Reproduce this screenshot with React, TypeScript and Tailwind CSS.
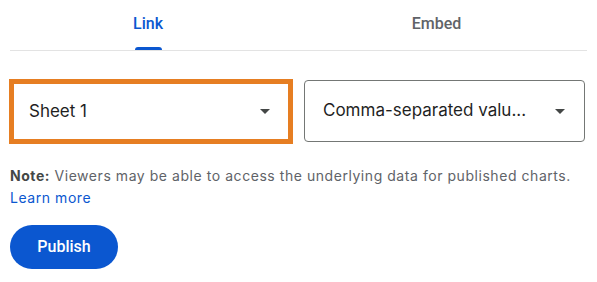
import { useState } from "react";

const tabs = ["Link", "Embed"];

function Caret() {
  return (
    <svg width="10" height="5" viewBox="0 0 10 5" className="shrink-0">
      <path d="M0 0h10L5 5z" fill="#444746" />
    </svg>
  );
}

export default function App() {
  const [tab, setTab] = useState("Link");

  return (
    <div className="w-[597px] h-[282px] bg-white overflow-hidden font-[Inter,sans-serif]">
      {/* tabs */}
      <div className="mx-[10px] flex border-b border-[#e3e3e3] h-[51px] font-[Roboto,sans-serif]">
        {tabs.map((t) => (
          <button
            key={t}
            onClick={() => setTab(t)}
            className={
              t === "Link"
                ? "w-[276px] flex justify-center"
                : "flex-1 flex justify-center"
            }
          >
            <span
              className={
                "relative h-full pt-[12px] text-[16px] font-medium " +
                (tab === t ? "text-[#0b57d0]" : "text-[#5f6368]")
              }
            >
              {t}
              {tab === t && (
                <span className="absolute left-[2px] right-[1px] bottom-0 h-[3px] rounded-t-[3px] bg-[#0b57d0]" />
              )}
            </span>
          </button>
        ))}
      </div>

      <div className="px-[10px] pt-[29px]">
        <div className="flex gap-[12px]">
          <div className="relative w-[282px] h-[63px] border border-[#747775] rounded-[4px] flex items-center pl-[18px] pr-[21px]">
            <span className="flex-1 text-[17px] text-[#1f1f1f]">Sheet 1</span>
            <Caret />
            <span className="absolute -inset-[2px] border-[5px] border-[#e67e22] pointer-events-none" />
          </div>
          <div className="w-[281px] h-[62px] border border-[#747775] rounded-[4px] flex items-center pl-[18px] pr-[19px]">
            <span className="flex-1 text-[17px] text-[#1f1f1f] whitespace-nowrap overflow-hidden">
              Comma-separated valu...
            </span>
            <Caret />
          </div>
        </div>

        <p className="mt-[22px] text-[14px] leading-[22px] tracking-[0.55px] text-[#5f6368] whitespace-nowrap">
          <span className="font-bold text-[#444746]">Note:</span> Viewers may be
          able to access the underlying data for published charts.
          <br />
          <a className="text-[#0b57d0]">Learn more</a>
        </p>

        <button className="mt-[16px] w-[108px] h-[44px] rounded-full bg-[#0b57d0] text-white text-[16px] font-medium font-[Roboto,sans-serif]">
          Publish
        </button>
      </div>
    </div>
  );
}
